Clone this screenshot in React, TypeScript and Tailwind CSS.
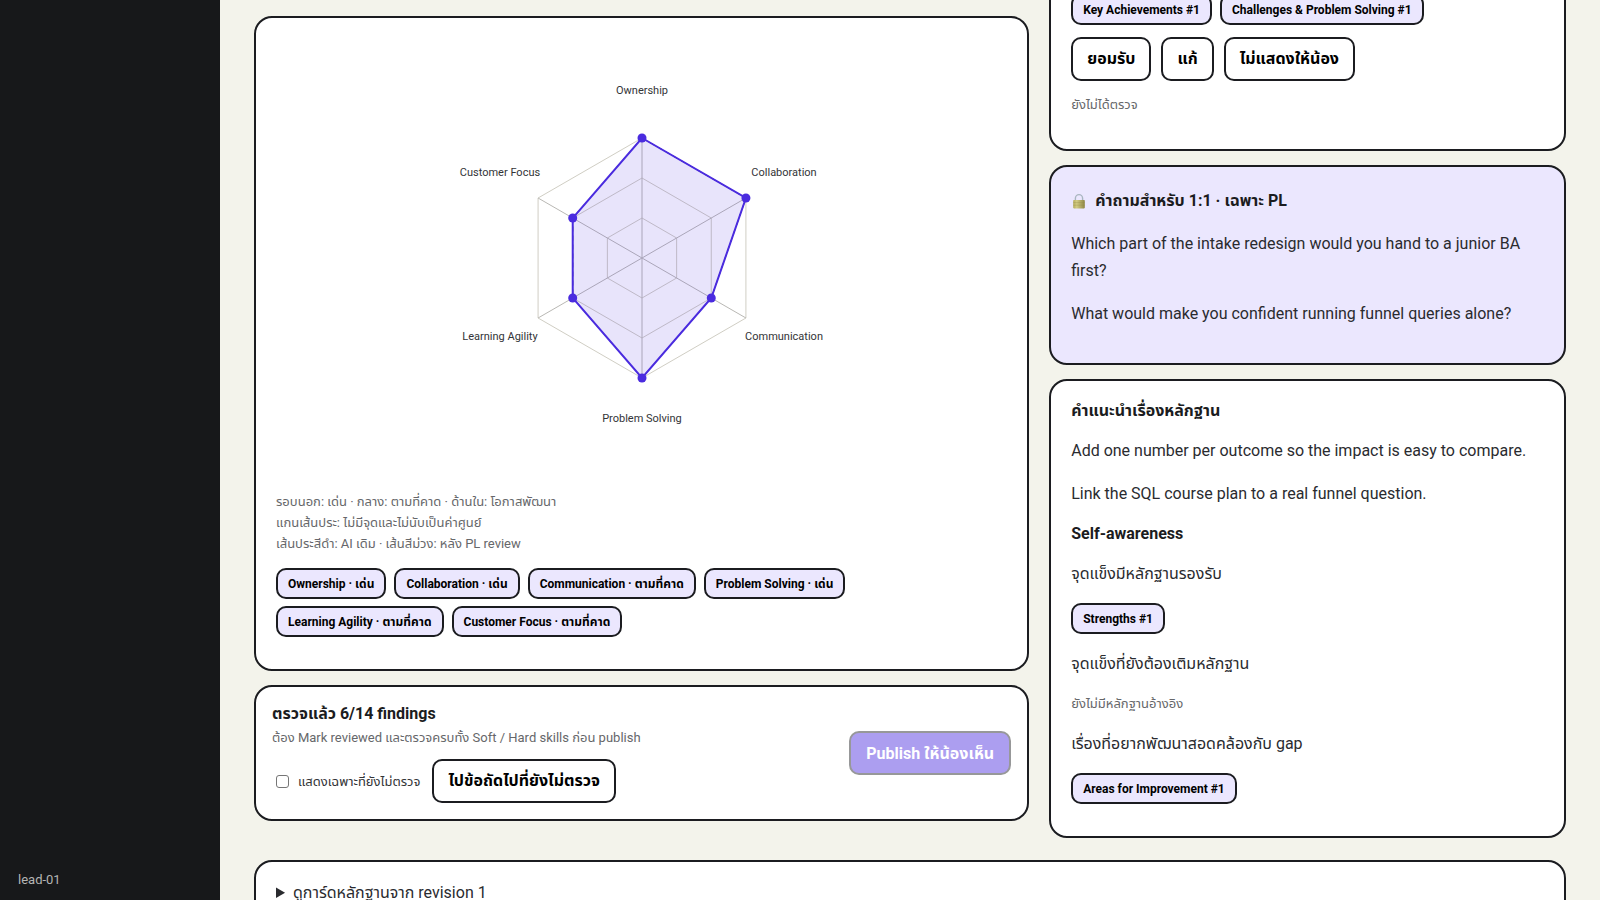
import type { ReactNode } from "react";

type Axis = { label: string; level: number; rating: string };

const AXES: Axis[] = [
  { label: "Ownership", level: 3, rating: "เด่น" },
  { label: "Collaboration", level: 3, rating: "เด่น" },
  { label: "Communication", level: 2, rating: "ตามที่คาด" },
  { label: "Problem Solving", level: 3, rating: "เด่น" },
  { label: "Learning Agility", level: 2, rating: "ตามที่คาด" },
  { label: "Customer Focus", level: 2, rating: "ตามที่คาด" },
];

const SIZE = 440;
const RADIUS = 120;
const LABEL_RADIUS = 164;

function point(index: number, radius: number) {
  const angle = (Math.PI / 3) * index - Math.PI / 2;
  return {
    x: SIZE / 2 + radius * Math.cos(angle),
    y: SIZE / 2 + radius * Math.sin(angle),
  };
}

function polygon(radii: number[]) {
  return radii
    .map((r, i) => {
      const p = point(i, r);
      return `${p.x.toFixed(2)},${p.y.toFixed(2)}`;
    })
    .join(" ");
}

function Radar() {
  const values = AXES.map((a) => (RADIUS * a.level) / 3);
  return (
    <svg
      viewBox={`0 0 ${SIZE} ${SIZE}`}
      className="mx-auto block w-full max-w-[440px]"
      role="img"
      aria-label="Soft skills radar"
    >
      {[1, 2, 3].map((l) => (
        <polygon
          key={l}
          points={polygon(AXES.map(() => (RADIUS * l) / 3))}
          fill="none"
          stroke="#d0cec4"
        />
      ))}
      {AXES.map((a, i) => {
        const p = point(i, RADIUS);
        return (
          <line key={a.label} x1={SIZE / 2} y1={SIZE / 2} x2={p.x} y2={p.y} stroke="#b9b8b4" />
        );
      })}
      <polygon
        points={polygon(values)}
        fill="none"
        stroke="#17181a"
        strokeDasharray="5 4"
      />
      <polygon
        points={polygon(values)}
        fill="#4a2bdf"
        fillOpacity="0.13"
        stroke="#4a2bdf"
        strokeWidth="2"
      />
      {AXES.map((a, i) => {
        const p = point(i, values[i]);
        return <circle key={a.label} cx={p.x} cy={p.y} r="4.5" fill="#4a2bdf" />;
      })}
      {AXES.map((a, i) => {
        const p = point(i, LABEL_RADIUS);
        return (
          <text
            key={a.label}
            x={p.x}
            y={p.y}
            textAnchor="middle"
            className="fill-[#333437] text-[11px]"
          >
            {a.label}
          </text>
        );
      })}
    </svg>
  );
}

function Card({ className = "p-5", children }: { className?: string; children: ReactNode }) {
  return (
    <section className={`rounded-[18px] border-2 border-[#1b1c20] ${className}`}>{children}</section>
  );
}

function Chip({ children }: { children: ReactNode }) {
  return (
    <button
      type="button"
      className="h-[31px] rounded-[10px] border-2 border-[#1b1c20] bg-[#ebe7fe] px-2.5 text-xs font-bold whitespace-nowrap text-black"
    >
      {children}
    </button>
  );
}

function Action({ children }: { children: ReactNode }) {
  return (
    <button
      type="button"
      className="h-11 rounded-[10px] border-2 border-[#1b1c20] bg-white px-3.5 text-base font-bold whitespace-nowrap text-black"
    >
      {children}
    </button>
  );
}

function Paragraph({ children }: { children: ReactNode }) {
  return <p className="my-4 text-[#2a2b2f]">{children}</p>;
}

function LockIcon() {
  return (
    <svg viewBox="0 0 16 16" className="size-4 shrink-0" aria-hidden="true">
      <defs>
        <linearGradient id="lock-body" x1="0" y1="0" x2="1" y2="0">
          <stop offset="0" stopColor="#b5ab5c" />
          <stop offset="0.3" stopColor="#d2cb83" />
          <stop offset="1" stopColor="#8f8644" />
        </linearGradient>
      </defs>
      <path d="M4.4 8V5.2a3.6 3.6 0 0 1 7.2 0V8" fill="none" stroke="#a9b6c0" strokeWidth="1.4" />
      <rect x="2.2" y="7" width="11.6" height="8.4" rx="0.8" fill="url(#lock-body)" />
      <path d="M2.2 9.6h11.6M2.2 12.2h11.6" stroke="#8f8644" strokeWidth="0.5" opacity="0.6" />
    </svg>
  );
}

export default function App() {
  return (
    <div className="flex h-screen overflow-hidden bg-[#f3f3eb] font-[Roboto,'Noto_Sans_Thai',sans-serif] text-base leading-[27px] text-[#1b1c20]">
      <aside className="flex w-[220px] shrink-0 flex-col justify-end bg-[#17181a] px-[18px] pb-2.5 text-[13px] leading-5 text-[#b4b4b4]">
        lead-01
      </aside>

      <main className="min-w-0 flex-1 px-[34px]">
        <div className="grid grid-cols-[3fr_2fr] items-start gap-5">
          <div className="flex flex-col gap-3.5 pt-4">
            <Card className="bg-white p-5">
              <Radar />
              <p className="mt-[13px] text-[13px] leading-[21px] text-[#66676a]">
                รอบนอก: เด่น · กลาง: ตามที่คาด · ด้านใน: โอกาสพัฒนา
                <br />
                แกนเส้นประ: ไม่มีจุดและไม่นับเป็นค่าศูนย์
                <br />
                เส้นประสีดำ: AI เดิม · เส้นสีม่วง: หลัง PL review
              </p>
              <div className="mt-3.5 mb-3 flex max-w-[600px] flex-wrap gap-x-2 gap-y-[7px]">
                {AXES.map((a) => (
                  <Chip key={a.label}>
                    {a.label} · {a.rating}
                  </Chip>
                ))}
              </div>
            </Card>

            <Card className="flex items-center justify-between bg-white p-4">
              <div>
                <h2 className="mb-0.5 leading-[22px] font-bold">ตรวจแล้ว 6/14 findings</h2>
                <p className="text-[13px] leading-[21px] text-[#66676a]">
                  ต้อง Mark reviewed และตรวจครบทั้ง Soft / Hard skills ก่อน publish
                </p>
                <div className="mt-[11px] flex items-center gap-3">
                  <label className="flex items-center gap-[9px] pl-1 text-[13px] text-[#333437]">
                    <input
                      type="checkbox"
                      className="size-[13px] appearance-none rounded-[3px] border border-[#767676] bg-white"
                    />
                    แสดงเฉพาะที่ยังไม่ตรวจ
                  </label>
                  <Action>ไปข้อถัดไปที่ยังไม่ตรวจ</Action>
                </div>
              </div>
              <button
                type="button"
                disabled
                className="h-11 rounded-[10px] border-2 border-[#1b1c20] bg-[#4a2bdf] px-[15px] font-bold whitespace-nowrap text-white opacity-45"
              >
                Publish ให้น้องเห็น
              </button>
            </Card>
          </div>

          <div className="-mt-7 flex flex-col gap-3.5">
            <Card className="bg-white p-5">
              <div className="flex gap-2">
                <Chip>Key Achievements #1</Chip>
                <Chip>Challenges &amp; Problem Solving #1</Chip>
              </div>
              <div className="mt-3 flex gap-2.5">
                <Action>ยอมรับ</Action>
                <Action>แก้</Action>
                <Action>ไม่แสดงให้น้อง</Action>
              </div>
              <p className="mt-[13px] mb-3.5 text-[13px] leading-[21px] text-[#66676a]">
                ยังไม่ได้ตรวจ
              </p>
            </Card>

            <Card className="bg-[#ebe7fe] p-5">
              <h2 className="flex items-center gap-2 font-bold">
                <LockIcon />
                คำถามสำหรับ 1:1 · เฉพาะ PL
              </h2>
              <Paragraph>
                Which part of the intake redesign would you hand to a junior BA first?
              </Paragraph>
              <Paragraph>What would make you confident running funnel queries alone?</Paragraph>
            </Card>

            <Card className="bg-white p-5">
              <h2 className="leading-5 font-bold">คำแนะนำเรื่องหลักฐาน</h2>
              <Paragraph>Add one number per outcome so the impact is easy to compare.</Paragraph>
              <Paragraph>Link the SQL course plan to a real funnel question.</Paragraph>
              <h2 className="leading-[21px] font-bold">Self-awareness</h2>
              <Paragraph>จุดแข็งมีหลักฐานรองรับ</Paragraph>
              <div className="flex">
                <Chip>Strengths #1</Chip>
              </div>
              <Paragraph>จุดแข็งที่ยังต้องเติมหลักฐาน</Paragraph>
              <p className="my-4 text-[13px] leading-[21px] text-[#66676a]">ยังไม่มีหลักฐานอ้างอิง</p>
              <Paragraph>เรื่องที่อยากพัฒนาสอดคล้องกับ gap</Paragraph>
              <div className="mb-3 flex">
                <Chip>Areas for Improvement #1</Chip>
              </div>
            </Card>
          </div>
        </div>

        <details className="mt-[22px] rounded-[18px] border-2 border-[#1b1c20] bg-white px-5 py-[17px]">
          <summary className="cursor-pointer text-[#2a2b2f]">ดูการ์ดหลักฐานจาก revision 1</summary>
        </details>
      </main>
    </div>
  );
}
